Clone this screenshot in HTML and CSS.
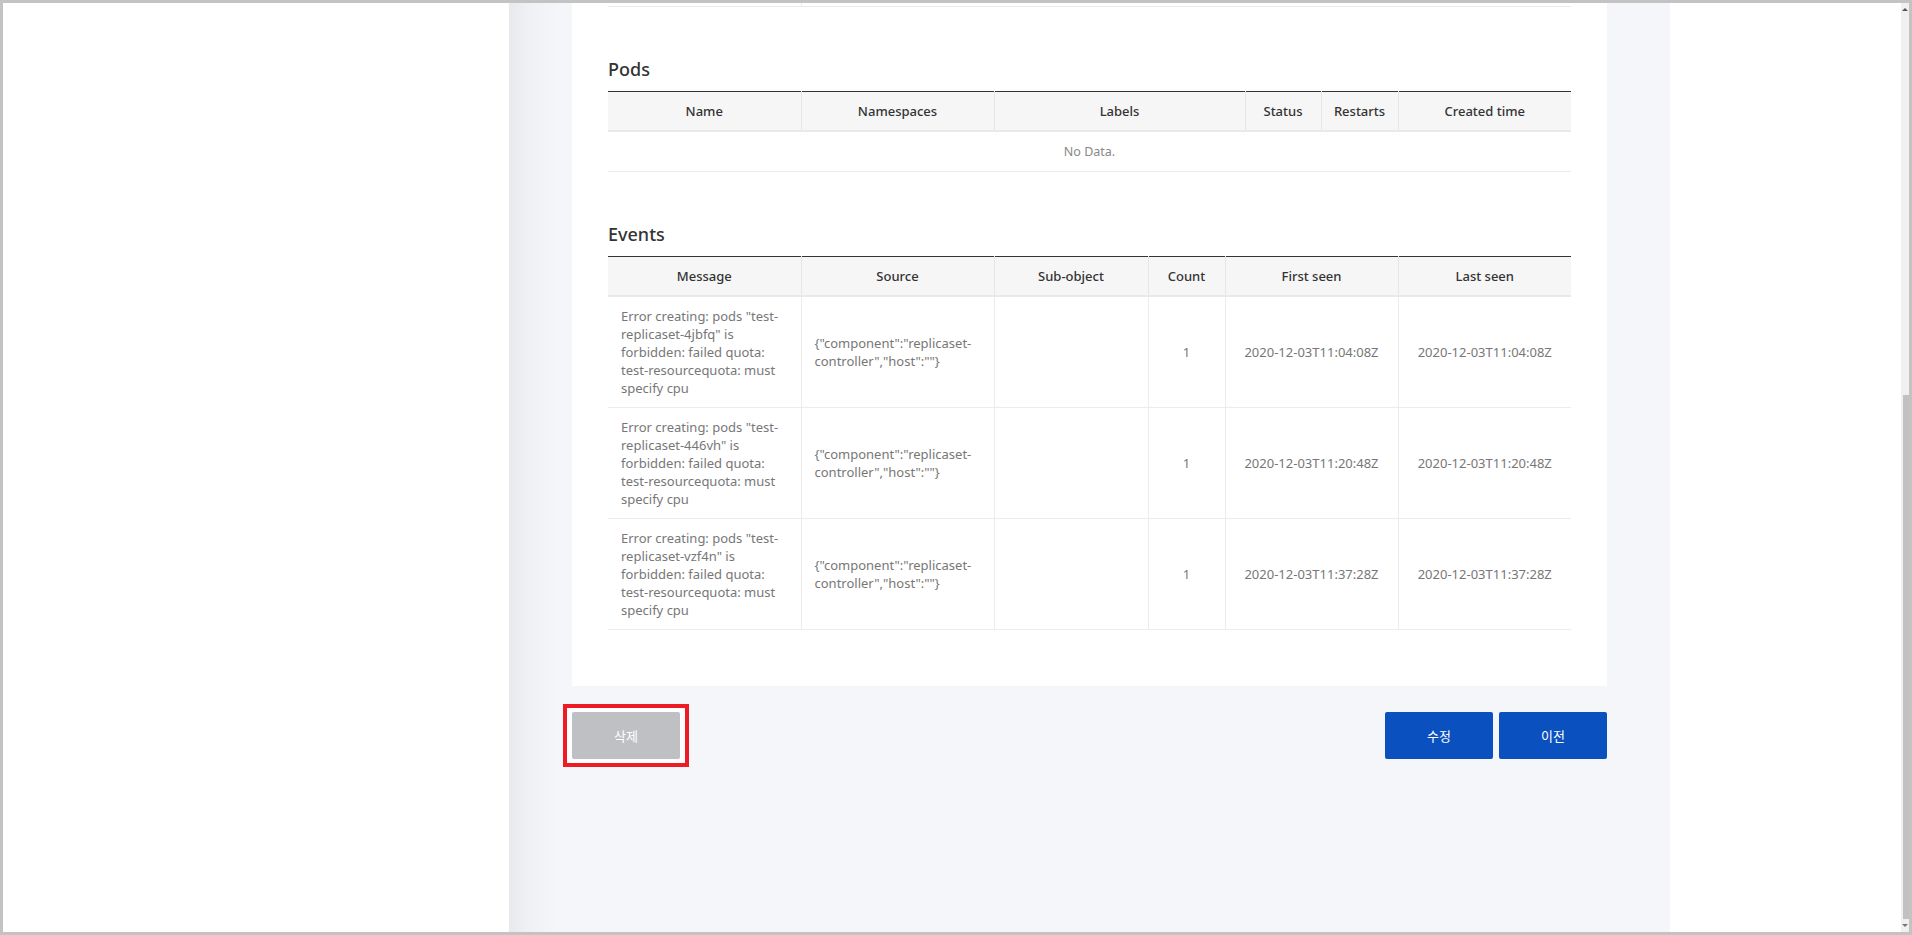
FILE: index.html
```html
<!DOCTYPE html>
<html lang="ko">
<head>
<meta charset="utf-8">
<title>ReplicaSet</title>
<link rel="stylesheet" href="styles.css">
</head>
<body>
<div class="frame">
  <div class="side-left"></div>
  <div class="main">
    <div class="card">
      <div class="prev-row"><div class="prev-cell"></div></div>

      <section class="section">
        <h2 class="section-title">Pods</h2>
        <table class="grid">
          <colgroup>
            <col class="w193"><col class="w193"><col class="w251"><col class="w76"><col class="w77"><col>
          </colgroup>
          <thead>
            <tr><th>Name</th><th>Namespaces</th><th>Labels</th><th>Status</th><th>Restarts</th><th>Created time</th></tr>
          </thead>
          <tbody>
            <tr><td class="empty" colspan="6">No Data.</td></tr>
          </tbody>
        </table>
      </section>

      <section class="section">
        <h2 class="section-title">Events</h2>
        <table class="grid">
          <colgroup>
            <col class="w193"><col class="w193"><col class="w154"><col class="w77"><col class="w173"><col>
          </colgroup>
          <thead>
            <tr><th>Message</th><th>Source</th><th>Sub-object</th><th>Count</th><th>First seen</th><th>Last seen</th></tr>
          </thead>
          <tbody>
            <tr>
              <td class="left msg">Error creating: pods "test-replicaset-4jbfq" is forbidden: failed quota: test-resourcequota: must specify cpu</td>
              <td class="left">{"component":"replicaset-controller","host":""}</td>
              <td></td>
              <td>1</td>
              <td>2020-12-03T11:04:08Z</td>
              <td>2020-12-03T11:04:08Z</td>
            </tr>
            <tr>
              <td class="left msg">Error creating: pods "test-replicaset-446vh" is forbidden: failed quota: test-resourcequota: must specify cpu</td>
              <td class="left">{"component":"replicaset-controller","host":""}</td>
              <td></td>
              <td>1</td>
              <td>2020-12-03T11:20:48Z</td>
              <td>2020-12-03T11:20:48Z</td>
            </tr>
            <tr>
              <td class="left msg">Error creating: pods "test-replicaset-vzf4n" is forbidden: failed quota: test-resourcequota: must specify cpu</td>
              <td class="left">{"component":"replicaset-controller","host":""}</td>
              <td></td>
              <td>1</td>
              <td>2020-12-03T11:37:28Z</td>
              <td>2020-12-03T11:37:28Z</td>
            </tr>
          </tbody>
        </table>
      </section>
    </div>

    <div class="actions">
      <button class="btn btn-gray annotated">삭제</button>
      <div class="btn-group">
        <button class="btn btn-blue">수정</button>
        <button class="btn btn-blue">이전</button>
      </div>
    </div>
  </div>
  <div class="side-right"></div>
  <div class="scrollbar">
    <div class="sb-arrow"><span class="tri-up"></span></div>
    <div class="sb-space"></div>
    <div class="sb-thumb"></div>
    <div class="sb-arrow sb-arrow-bottom"><span class="tri-down"></span></div>
  </div>
</div>
</body>
</html>
```

FILE: styles.css
```css
html, body {
  margin: 0;
  padding: 0;
}

body {
  font-family: "Noto Sans", "Noto Sans CJK KR", sans-serif;
  color: #333;
}

.frame {
  width: 1912px;
  height: 935px;
  box-sizing: border-box;
  border: 3px solid #c3c3c3;
  display: flex;
  overflow: hidden;
  background: #fff;
}

.side-left {
  width: 506px;
  flex: none;
  background: #fff;
}

.main {
  width: 1161px;
  flex: none;
  box-sizing: border-box;
  padding: 0 63px;
  background: linear-gradient(to right, #e8e9ed 0, #f0f1f5 20px, #f5f6fa 50px);
}

.side-right {
  width: 231px;
  flex: none;
  background: #fff;
}

/* card */
.card {
  background: #fff;
  padding: 0 36px 56px;
}

.prev-row {
  height: 3px;
  border-bottom: 1px solid #ececec;
  display: flex;
}

.prev-cell {
  width: 193px;
  border-right: 1px solid #ececec;
}

.section {
  margin-top: 49px;
}

.section-title {
  margin: 0 0 9px;
  font-size: 18px;
  line-height: 26px;
  font-weight: 500;
  color: #333;
}

/* tables */
.grid {
  width: 100%;
  table-layout: fixed;
  border-collapse: collapse;
  border-top: 1px solid #333;
  font-size: 13px;
}

.w193 { width: 193px; }
.w251 { width: 251px; }
.w154 { width: 154px; }
.w173 { width: 173px; }
.w76 { width: 76px; }
.w77 { width: 77px; }

.grid th {
  height: 38px;
  padding: 0 4px;
  background: #f6f6f6;
  font-weight: 500;
  color: #333;
  text-align: center;
  border-left: 1px solid #e6e6e6;
  border-bottom: 2px solid #e9e9e9;
  line-height: 18px;
}

.grid th:first-child {
  border-left: 0;
}

.grid td {
  padding: 10px 6px;
  line-height: 18px;
  color: #777;
  text-align: center;
  vertical-align: middle;
  border-left: 1px solid #ececec;
  border-bottom: 1px solid #ececec;
  word-wrap: break-word;
}

.grid td:first-child {
  border-left: 0;
}

.grid td.left {
  text-align: left;
  padding-left: 13px;
  padding-right: 16px;
}

.grid td.msg {
  padding-right: 20px;
}

.grid td.empty {
  height: 19px;
  font-size: 12.5px;
  color: #888;
}

/* buttons */
.actions {
  margin-top: 26px;
  display: flex;
  justify-content: space-between;
  align-items: flex-start;
}

.btn-group {
  display: flex;
  gap: 6px;
}

.btn {
  width: 108px;
  height: 47px;
  border: 0;
  border-radius: 2px;
  font-family: "Noto Sans CJK KR", "Noto Sans", sans-serif;
  font-size: 13px;
  color: #fff;
  padding: 0;
  cursor: pointer;
}

.btn-gray {
  background: #bfc0c4;
}

.btn-blue {
  background: #0a51bf;
}

.annotated {
  position: relative;
  box-shadow: -1px 0 0 4px #fff, 1px 0 0 4px #fff;
}

.annotated::after {
  content: "";
  position: absolute;
  top: -8px;
  bottom: -8px;
  left: -9px;
  right: -9px;
  border: 4px solid #ed1c24;
  pointer-events: none;
}

/* scrollbar */
.scrollbar {
  width: 8px;
  flex: none;
  background: #f0f0f0;
  display: flex;
  flex-direction: column;
}

.sb-arrow {
  height: 12px;
  flex: none;
  display: flex;
  align-items: center;
  justify-content: flex-end;
  padding-right: 1px;
}

.sb-arrow-bottom {
  height: 13px;
}

.sb-space {
  height: 380px;
  flex: none;
}

.sb-thumb {
  height: 524px;
  flex: none;
  margin-left: 2px;
  background: #c1c1c1;
}

.tri-up {
  width: 0;
  height: 0;
  border-left: 3px solid transparent;
  border-right: 3px solid transparent;
  border-bottom: 3px solid #555;
}

.tri-down {
  width: 0;
  height: 0;
  border-left: 3px solid transparent;
  border-right: 3px solid transparent;
  border-top: 3px solid #777;
}
```
